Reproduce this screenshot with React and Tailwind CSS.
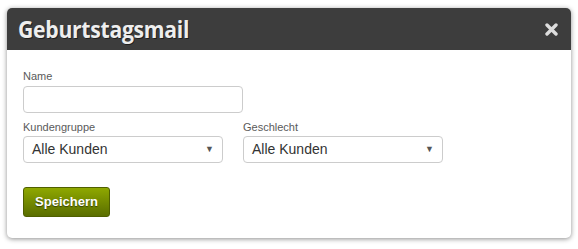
export default function App() {
  return (
    <div className="w-[578px] h-[249px] bg-white pt-2 pl-[7px]">
      <div className="w-[564px] h-[230px] rounded-[5px] bg-white shadow-[0_1px_5px_rgba(0,0,0,0.45)] overflow-hidden">
        <div className="h-[42px] bg-[#3d3d3d] flex items-center justify-between pl-[11px] pr-[13px]">
          <h1 className="font-['Open_Sans',sans-serif] font-bold text-[23px] tracking-[-0.3px] text-[#eeeeee] [text-shadow:1px_1px_0_rgba(0,0,0,0.5)] scale-x-[0.92] origin-left">
            Geburtstagsmail
          </h1>
          <svg width="13" height="13" viewBox="0 0 13 13" className="mt-[1px]">
            <path d="M2 2 L11 11 M11 2 L2 11" stroke="#dddddd" strokeWidth="3.4" strokeLinecap="round" />
          </svg>
        </div>
        <div className="pl-[16px] pt-[20px] font-['Liberation_Sans',Arial,sans-serif]">
          <label className="block text-[11px] text-[#5a5a5a] leading-[13px] mb-[3px]">Name</label>
          <input className="block w-[220px] h-[27px] border border-[#ccc] rounded-[4px] px-2 text-[14px] outline-none" />
          <div className="flex gap-[20px] mt-[8px]">
            <div>
              <label className="block text-[11px] text-[#5a5a5a] leading-[13px] mb-[2px]">Kundengruppe</label>
              <div className="w-[200px] h-[27px] border border-[#ccc] rounded-[4px] flex items-center justify-between pl-[8px] pr-[8px]">
                <span className="text-[14px] text-[#333]">Alle Kunden</span>
                <span className="text-[9px] text-[#555]">▼</span>
              </div>
            </div>
            <div>
              <label className="block text-[11px] text-[#5a5a5a] leading-[13px] mb-[2px]">Geschlecht</label>
              <div className="w-[200px] h-[27px] border border-[#ccc] rounded-[4px] flex items-center justify-between pl-[8px] pr-[8px]">
                <span className="text-[14px] text-[#333]">Alle Kunden</span>
                <span className="text-[9px] text-[#555]">▼</span>
              </div>
            </div>
          </div>
          <button className="mt-[24px] w-[87px] h-[30px] rounded-[3px] border border-[#4f5f00] bg-gradient-to-b from-[#8fa800] to-[#5a6e00] text-white font-bold text-[13px] [text-shadow:0_1px_1px_rgba(0,0,0,0.5)]">
            Speichern
          </button>
        </div>
      </div>
    </div>
  );
}
